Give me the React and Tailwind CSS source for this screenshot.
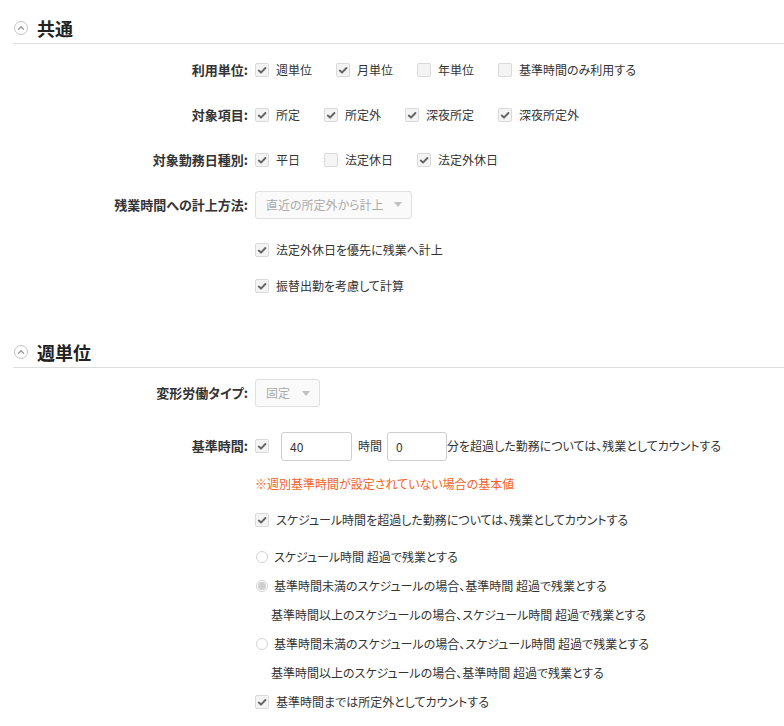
import React from 'react';

const Check = ({ checked }) => (
  <span className="flex w-[14px] h-[14px] shrink-0 items-center justify-center rounded-[2px] border border-[#d9d9d9] bg-[#f4f4f4]">
    {checked && (
      <svg width="10" height="10" viewBox="0 0 10 10">
        <path d="M1.8 5.6 L4 7.6 L8.4 3" fill="none" stroke="#666" strokeWidth="2" strokeLinecap="round" strokeLinejoin="round" />
      </svg>
    )}
  </span>
);

const Radio = ({ on }) => (
  <span className="flex w-[12px] h-[12px] shrink-0 items-center justify-center rounded-full border border-[#d4d4d4] bg-white">
    {on && <span className="w-[8px] h-[8px] rounded-full bg-[#cfcfcf]" />}
  </span>
);

const Item = ({ checked, children }) => (
  <label className="flex items-center gap-[7px]">
    <Check checked={checked} />
    <span>{children}</span>
  </label>
);

const Heading = ({ title, className }) => (
  <div className={`flex items-center h-[31px] border-b border-[#dcdcdc] ${className}`}>
    <span className="flex w-[14px] h-[14px] ml-[1px] items-center justify-center rounded-full border border-[#c4c4c4]">
      <svg width="8" height="8" viewBox="0 0 8 8">
        <path d="M1.5 5.3 L4 2.8 L6.5 5.3" fill="none" stroke="#9a9a9a" strokeWidth="1.4" strokeLinecap="round" strokeLinejoin="round" />
      </svg>
    </span>
    <h2 className="ml-[9px] text-[18px] font-bold text-[#222] leading-none">{title}</h2>
  </div>
);

const Label = ({ children }) => (
  <div className="w-[236px] pr-[1px] text-right text-[13px] font-bold text-[#333]">{children}:</div>
);

const Row = ({ label, className = 'h-[45px]', children }) => (
  <div className={`flex items-center ${className}`}>
    <Label>{label}</Label>
    <div className="ml-[6px] flex items-center gap-[24px]">{children}</div>
  </div>
);

const Select = ({ value, width }) => (
  <div className={`flex items-center justify-between h-[28px] ${width} pl-[10px] pr-[9px] rounded-[3px] border border-[#e0e0e0] bg-[#fafafa] text-[#aaa]`}>
    <span>{value}</span>
    <svg width="8" height="5" viewBox="0 0 8 5"><path d="M0 0 H8 L4 5 Z" fill="#c0c0c0" /></svg>
  </div>
);

export default function App() {
  return (
    <div className="w-[784px] pl-[13px] pt-[13px] text-[12px] text-[#333] bg-white [font-feature-settings:'palt']" style={{ fontFamily: '"Noto Sans CJK JP", "Noto Sans", sans-serif' }}>
      <Heading title="共通" />
      <div className="pt-[3px]">
        <Row label="利用単位">
          <Item checked>週単位</Item>
          <Item checked>月単位</Item>
          <Item>年単位</Item>
          <Item>基準時間のみ利用する</Item>
        </Row>
        <Row label="対象項目">
          <Item checked>所定</Item>
          <Item checked>所定外</Item>
          <Item checked>深夜所定</Item>
          <Item checked>深夜所定外</Item>
        </Row>
        <Row label="対象勤務日種別">
          <Item checked>平日</Item>
          <Item>法定休日</Item>
          <Item checked>法定外休日</Item>
        </Row>
        <Row label="残業時間への計上方法">
          <Select value="直近の所定外から計上" width="w-[157px]" />
        </Row>
        <div className="flex items-center h-[45px] ml-[242px]">
          <Item checked>法定外休日を優先に残業へ計上</Item>
        </div>
        <div className="flex items-center h-[28px] ml-[242px]">
          <Item checked>振替出勤を考慮して計算</Item>
        </div>
      </div>

      <Heading title="週単位" className="mt-[37px]" />
      <div className="pt-[3px]">
        <Row label="変形労働タイプ" className="h-[44px]">
          <Select value="固定" width="w-[65px]" />
        </Row>
        <div className="flex items-center h-[40px] mt-[11px]">
          <Label>基準時間</Label>
          <div className="ml-[6px] flex items-center">
            <Check checked />
            <input readOnly value="40" className="ml-[12px] w-[71px] h-[29px] px-[8px] rounded-[3px] border border-[#cfcfcf] bg-white text-[#333] outline-none" />
            <span className="ml-[6px]">時間</span>
            <input readOnly value="0" className="ml-[5px] w-[60px] h-[29px] px-[8px] rounded-[3px] border border-[#cfcfcf] bg-white text-[#333] outline-none" />
            <span>分を超過した勤務については、残業としてカウントする</span>
          </div>
        </div>
        <div className="flex items-center h-[36px] ml-[242px] text-[#f5622a]">
          ※週別基準時間が設定されていない場合の基本値
        </div>
        <div className="flex items-center h-[36px] ml-[242px]">
          <Item checked>スケジュール時間を超過した勤務については、残業としてカウントする</Item>
        </div>
        <div className="pt-[4px] ml-[243px]">
          <div className="flex items-center h-[29px] gap-[6px]">
            <Radio />
            <span>スケジュール時間 超過で残業とする</span>
          </div>
          <div className="flex items-center h-[29px] gap-[6px]">
            <Radio on />
            <span>基準時間未満のスケジュールの場合、基準時間 超過で残業とする</span>
          </div>
          <div className="flex items-center h-[29px] pl-[15px]">
            基準時間以上のスケジュールの場合、スケジュール時間 超過で残業とする
          </div>
          <div className="flex items-center h-[29px] gap-[6px]">
            <Radio />
            <span>基準時間未満のスケジュールの場合、スケジュール時間 超過で残業とする</span>
          </div>
          <div className="flex items-center h-[29px] pl-[15px]">
            基準時間以上のスケジュールの場合、基準時間 超過で残業とする
          </div>
          <div className="flex items-center h-[29px] -ml-[1px]">
            <Item checked>基準時間までは所定外としてカウントする</Item>
          </div>
        </div>
      </div>
    </div>
  );
}
